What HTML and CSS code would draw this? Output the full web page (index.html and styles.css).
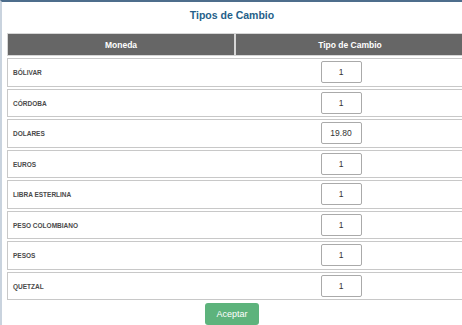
FILE: index.html
```html
<!DOCTYPE html>
<html lang="es">
<head>
    <meta charset="UTF-8">
    <meta name="viewport" content="width=device-width, initial-scale=1.0">
    <title>Tipos de Cambio</title>
    <link rel="stylesheet" href="styles.css">
</head>
<body>
    <div class="panel">
        <h1 class="title">Tipos de Cambio</h1>

        <table class="rates">
            <thead>
                <tr>
                    <th class="col-name">Moneda</th>
                    <th>Tipo de Cambio</th>
                </tr>
            </thead>
            <tbody>
                <tr><td class="name">BÓLIVAR</td><td class="value"><input type="text" value="1"></td></tr>
                <tr><td class="name">CÓRDOBA</td><td class="value"><input type="text" value="1"></td></tr>
                <tr><td class="name">DOLARES</td><td class="value"><input type="text" value="19.80"></td></tr>
                <tr><td class="name">EUROS</td><td class="value"><input type="text" value="1"></td></tr>
                <tr><td class="name">LIBRA ESTERLINA</td><td class="value"><input type="text" value="1"></td></tr>
                <tr><td class="name">PESO COLOMBIANO</td><td class="value"><input type="text" value="1"></td></tr>
                <tr><td class="name">PESOS</td><td class="value"><input type="text" value="1"></td></tr>
                <tr><td class="name">QUETZAL</td><td class="value"><input type="text" value="1"></td></tr>
            </tbody>
        </table>

        <div class="actions">
            <button id="accept">Aceptar</button>
        </div>
    </div>
</body>
</html>
```

FILE: styles.css
```css
body {
    font-family: "Liberation Sans", Arial, sans-serif;
    margin: 0;
    padding: 0;
    background-color: #fff;
    overflow: hidden;
}
.panel {
    border-top: 2px solid #4d6d8c;
    border-left: 2px solid #c9d3de;
    padding: 6px 0 0 5px;
    min-height: 330px;
    box-sizing: border-box;
}
.title {
    margin: 0 0 9px;
    font-size: 10.5px;
    line-height: 14px;
    text-align: center;
    color: #255f8a;
    padding-right: 5px;
}
.rates {
    width: 458px;
    border-collapse: separate;
    border-spacing: 0 2px;
    table-layout: fixed;
}
.rates th {
    background-color: #666;
    color: #fff;
    font-size: 8.5px;
    height: 23px;
    padding: 0;
    border: 1px solid #d6d6d6;
    box-sizing: border-box;
}
.rates th.col-name {
    width: 228px;
}
.rates td {
    height: 28.5px;
    padding: 0;
    border-top: 1px solid #c8c8c8;
    border-bottom: 1px solid #c8c8c8;
    box-sizing: border-box;
}
.rates td.name {
    border-left: 1px solid #c8c8c8;
    padding-left: 5px;
    padding-top: 1px;
    font-size: 6.5px;
    font-weight: bold;
    color: #4a4a4a;
}
.rates td.value {
    text-align: center;
    padding-right: 18px;
}
.rates input {
    width: 41px;
    height: 22px;
    box-sizing: border-box;
    border: 1px solid #aaa;
    border-radius: 2px;
    text-align: center;
    font-family: "Liberation Sans", Arial, sans-serif;
    font-size: 8.5px;
    color: #333;
    padding: 0;
    vertical-align: middle;
}
.actions {
    text-align: center;
    padding-right: 5px;
    padding-top: 1px;
}
.actions button {
    width: 54px;
    height: 22px;
    background-color: #5db37c;
    color: #fff;
    border: none;
    border-radius: 3px;
    font-family: "Liberation Sans", Arial, sans-serif;
    font-size: 9px;
    cursor: pointer;
}
```
